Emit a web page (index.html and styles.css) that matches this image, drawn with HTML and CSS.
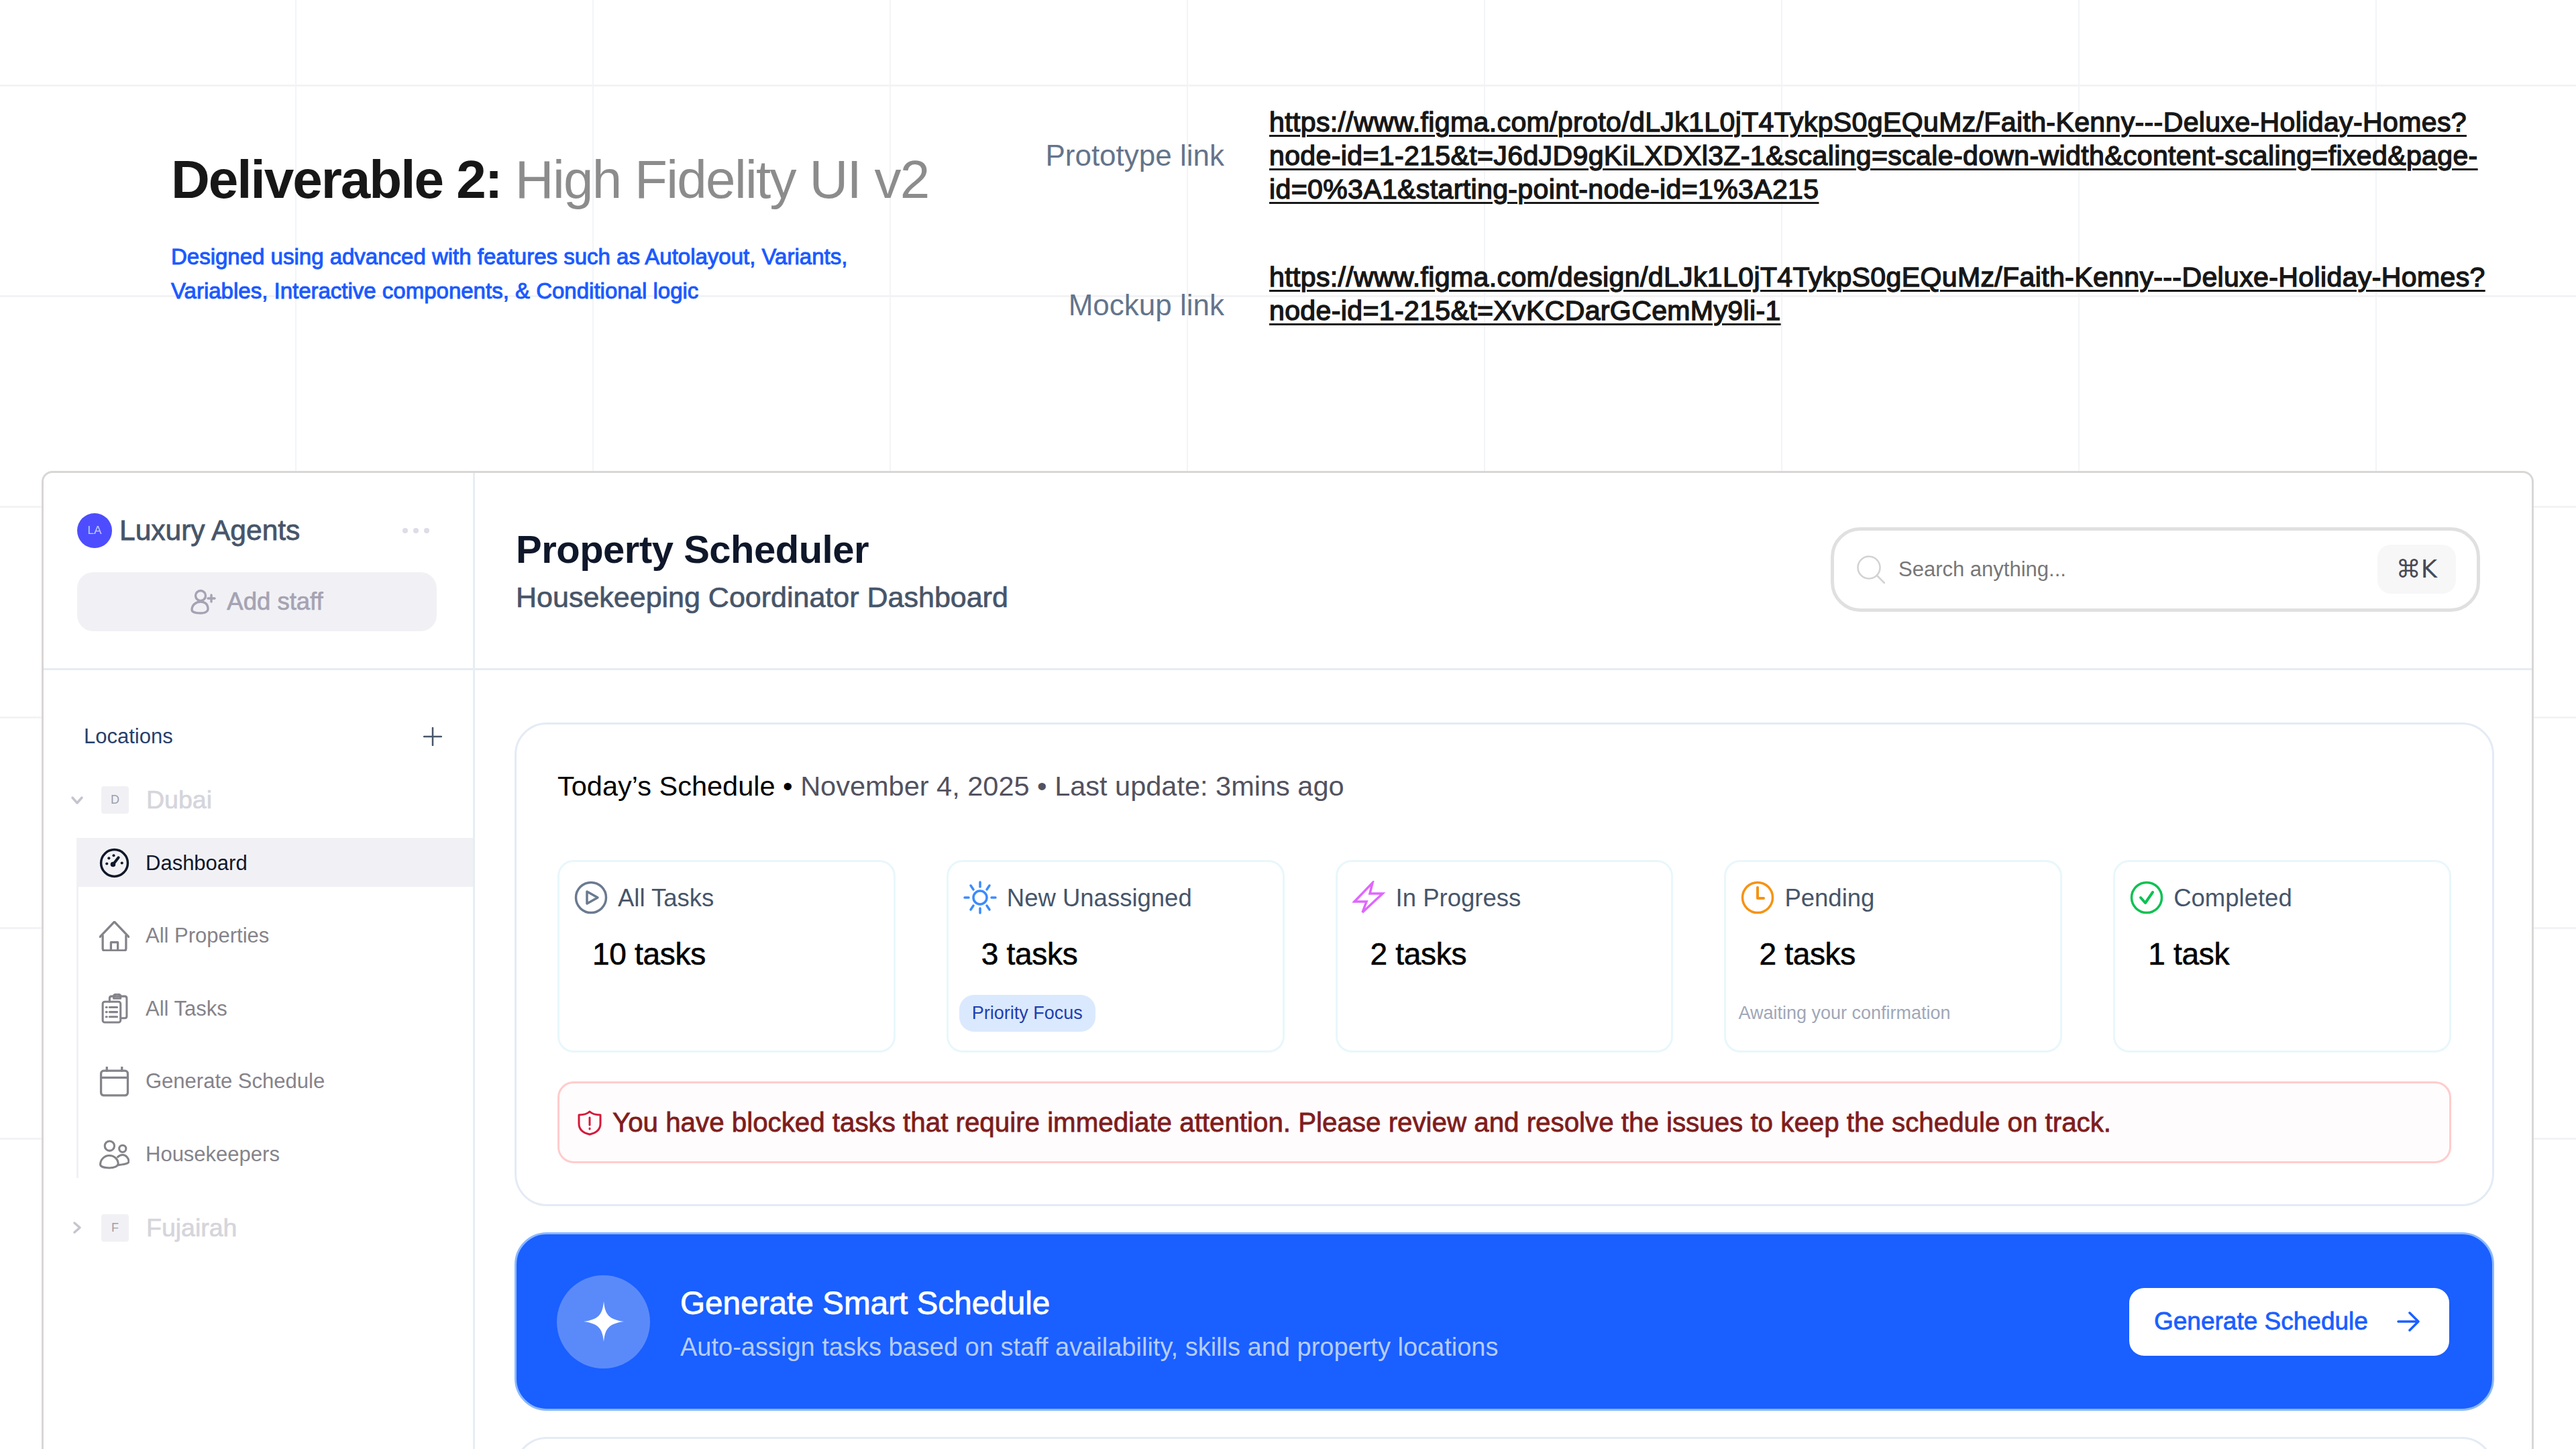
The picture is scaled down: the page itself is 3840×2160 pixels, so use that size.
FILE: index.html
```html
<!DOCTYPE html>
<html lang="en">
<head>
  <meta charset="UTF-8" />
  <title>Deliverable 2: High Fidelity UI v2</title>
  <link rel="stylesheet" href="styles.css">
</head>
<body>
  <header class="hero">
    <div class="hero-intro">
      <h1 class="hero-title"><b>Deliverable 2:</b> High Fidelity UI v2</h1>
      <p class="hero-note">Designed using advanced with features such as Autolayout, Variants,<br>Variables, Interactive components, &amp; Conditional logic</p>
    </div>
    <div class="hero-links">
      <span class="link-label">Prototype link</span>
      <a class="link-url" href="#">https://www.figma.com/proto/dLJk1L0jT4TykpS0gEQuMz/Faith-Kenny---Deluxe-Holiday-Homes?<br>node-id=1-215&amp;t=J6dJD9gKiLXDXl3Z-1&amp;scaling=scale-down-width&amp;content-scaling=fixed&amp;page-<br>id=0%3A1&amp;starting-point-node-id=1%3A215</a>
      <span class="link-label link-label-low">Mockup link</span>
      <a class="link-url" href="#">https://www.figma.com/design/dLJk1L0jT4TykpS0gEQuMz/Faith-Kenny---Deluxe-Holiday-Homes?<br>node-id=1-215&amp;t=XvKCDarGCemMy9li-1</a>
    </div>
  </header>

  <div class="app">
    <aside class="sidebar">
      <div class="side-top">
        <div class="org">
          <span class="org-avatar">LA</span>
          <span class="org-name">Luxury Agents</span>
          <span class="org-more"><i></i><i></i><i></i></span>
        </div>
        <button class="add-staff">
          <svg class="add-icon" viewBox="0 0 38 38" fill="none" stroke="currentColor" stroke-width="3.4" stroke-linecap="round" stroke-linejoin="round"><circle cx="15" cy="10" r="7.5"/><path d="M2 31c0-7 6-12 13-12 2.500 0 5 .7 7 2 3 2 4 5 4 9 0 2-2 6-11 6S2 34 2 31z"/><path d="M26 14h10M31 9v10"/></svg>
          Add staff
        </button>
      </div>
      <div class="side-body">
        <div class="loc-head">
          <span>Locations</span>
          <svg class="loc-plus" viewBox="0 0 28 28" fill="none" stroke="currentColor" stroke-width="2.500" stroke-linecap="round"><path d="M14 1v26M1 14h26"/></svg>
        </div>
        <div class="loc">
          <svg class="loc-chevron" viewBox="0 0 20 20" fill="none" stroke="currentColor" stroke-width="3.500" stroke-linecap="round" stroke-linejoin="round"><path d="M3 6l7 8 7-8"/></svg>
          <span class="loc-badge">D</span>
          <span class="loc-name">Dubai</span>
        </div>
        <nav class="nav">
          <a class="nav-item active">
            <svg class="nav-icon" viewBox="0 0 44 44" fill="none" stroke="currentColor" stroke-width="3.400" stroke-linecap="round"><circle cx="22" cy="22" r="19.500"/><path d="M21 23l7-9" stroke-width="4"/><circle cx="20" cy="24" r="2" fill="currentColor"/><g fill="currentColor" stroke="none"><circle cx="11" cy="23" r="2"/><circle cx="14" cy="15" r="2"/><circle cx="21" cy="11" r="2"/><circle cx="33" cy="22" r="2"/></g></svg>
            Dashboard
          </a>
          <a class="nav-item">
            <svg class="nav-icon" viewBox="0 0 44 44" fill="none" stroke="currentColor" stroke-width="3.200" stroke-linecap="round" stroke-linejoin="round"><path d="M1 23L22 1l21 22"/><path d="M5 21v19c0 2 1 3 3 3h28c2 0 3-1 3-3V21"/><path d="M17 43V31h10v12"/></svg>
            All Properties
          </a>
          <a class="nav-item">
            <svg class="nav-icon" viewBox="0 0 44 44" fill="none" stroke="currentColor" stroke-width="3" stroke-linecap="round" stroke-linejoin="round"><rect x="5" y="12" width="26" height="30" rx="3"/><path d="M15 12V7c0-2 1-3 3-3h19c2 0 3 1 3 3v26c0 2-1 3-3 3h-6"/><path d="M21 4c0-2 2-3 5-3s5 1 5 3v3H21z"/><path d="M15 20h11M15 27h11M15 34h11"/><path d="M10 20h1M10 27h1M10 34h1"/></svg>
            All Tasks
          </a>
          <a class="nav-item">
            <svg class="nav-icon" viewBox="0 0 44 44" fill="none" stroke="currentColor" stroke-width="3.200" stroke-linecap="round" stroke-linejoin="round"><rect x="2.500" y="6" width="39" height="36" rx="4"/><path d="M3 16h38M11 1v5M33 1v5"/></svg>
            Generate Schedule
          </a>
          <a class="nav-item">
            <svg class="nav-icon" viewBox="0 0 44 42" fill="none" stroke="currentColor" stroke-width="3" stroke-linecap="round" stroke-linejoin="round"><circle cx="15" cy="9" r="7"/><circle cx="34" cy="13" r="5"/><path d="M1.500 36c0-7 6-13 13-13s13 5 13 12c0 3-5 6-13 6S1.500 39 1.500 36z"/><path d="M27 25c2-2 4-3 7-3 5 0 9 5 9 10 0 3-8 4-16 5"/></svg>
            Housekeepers
          </a>
        </nav>
        <div class="loc loc-last">
          <svg class="loc-chevron" viewBox="0 0 20 20" fill="none" stroke="currentColor" stroke-width="3.500" stroke-linecap="round" stroke-linejoin="round"><path d="M6 3l8 7-8 7"/></svg>
          <span class="loc-badge">F</span>
          <span class="loc-name">Fujairah</span>
        </div>
      </div>
    </aside>

    <main class="main">
      <div class="topbar">
        <div class="page-head">
          <h2 class="page-title">Property Scheduler</h2>
          <p class="page-sub">Housekeeping Coordinator Dashboard</p>
        </div>
        <div class="search">
          <svg class="search-icon" viewBox="0 0 42 42" fill="none" stroke="currentColor" stroke-width="2.500" stroke-linecap="round"><circle cx="18" cy="18" r="16.500"/><path d="M30 30l11 11"/></svg>
          <span class="search-text">Search anything...</span>
          <kbd class="search-key">⌘K</kbd>
        </div>
      </div>

      <div class="content">
        <section class="card">
          <h3 class="today"><b>Today’s Schedule •</b> November 4, 2025 • Last update: 3mins ago</h3>
          <div class="stats">
            <div class="stat">
              <div class="stat-head">
                <svg class="stat-icon icon-slate" viewBox="0 0 50 50" fill="none" stroke="currentColor" stroke-width="3.500" stroke-linejoin="round"><circle cx="25" cy="25" r="22.500"/><path d="M19 16l16 9-16 9z"/></svg>
                All Tasks
              </div>
              <div class="stat-count">10 tasks</div>
            </div>
            <div class="stat">
              <div class="stat-head">
                <svg class="stat-icon icon-blue" viewBox="0 0 50 50" fill="none" stroke="currentColor" stroke-width="3.500" stroke-linecap="round"><circle cx="25" cy="25" r="10"/><path d="M25 2v7M25 41v7M2 25h6M42 25h6M11 7l4 6M39 7l-4 6M11 43l4-6M39 43l-4-6"/></svg>
                New Unassigned
              </div>
              <div class="stat-count">3 tasks</div>
              <span class="stat-tag">Priority Focus</span>
            </div>
            <div class="stat">
              <div class="stat-head">
                <svg class="stat-icon icon-pink" viewBox="0 0 50 50" fill="none" stroke="currentColor" stroke-width="3.500" stroke-linejoin="miter"><path d="M30 3L3 31h18l-6 16 30-28H26z"/></svg>
                In Progress
              </div>
              <div class="stat-count">2 tasks</div>
            </div>
            <div class="stat">
              <div class="stat-head">
                <svg class="stat-icon icon-orange" viewBox="0 0 50 50" fill="none" stroke="currentColor" stroke-width="3.500" stroke-linecap="round" stroke-linejoin="round"><circle cx="25" cy="25" r="22.500"/><path d="M25 10v16h9" stroke-width="4"/></svg>
                Pending
              </div>
              <div class="stat-count">2 tasks</div>
              <p class="stat-note">Awaiting your confirmation</p>
            </div>
            <div class="stat">
              <div class="stat-head">
                <svg class="stat-icon icon-green" viewBox="0 0 50 50" fill="none" stroke="currentColor" stroke-width="3.500" stroke-linecap="round" stroke-linejoin="round"><circle cx="25" cy="25" r="22.500"/><path d="M16 25l7 8 11-16" stroke-width="4"/></svg>
                Completed
              </div>
              <div class="stat-count">1 task</div>
            </div>
          </div>
          <div class="alert">
            <svg class="alert-icon" viewBox="0 0 38 38" fill="none" stroke="currentColor" stroke-width="3" stroke-linecap="round" stroke-linejoin="round"><path d="M19 2c4 4 9 5 16 5v13c0 9-7 14-16 16C10 34 3 29 3 20V7c7 0 12-1 16-5z"/><path d="M19 11v11M19 27v1"/></svg>
            You have blocked tasks that require immediate attention. Please review and resolve the issues to keep the schedule on track.
          </div>
        </section>

        <section class="promo">
          <span class="promo-badge">
            <svg class="promo-star" viewBox="0 0 60 60" fill="#fff"><path d="M30 0c2 20 8 27 30 30-22 3-28 10-30 30-2-20-8-27-30-30 22-3 28-10 30-30z"/></svg>
          </span>
          <div class="promo-text">
            <h3 class="promo-title">Generate Smart Schedule</h3>
            <p class="promo-sub">Auto-assign tasks based on staff availability, skills and property locations</p>
          </div>
          <button class="promo-btn">
            Generate Schedule
            <svg class="promo-arrow" viewBox="0 0 34 30" fill="none" stroke="currentColor" stroke-width="3.500" stroke-linecap="round" stroke-linejoin="round"><path d="M2 15h30M19 2l13 13-13 13"/></svg>
          </button>
        </section>

        <section class="card card-next"></section>
      </div>
    </main>
  </div>
</body>
</html>
```

FILE: styles.css
```css
* {
  box-sizing: border-box;
}
html, body {
  margin: 0;
  height: 2160px;
  overflow: hidden;
}
body {
  font-family: "Liberation Sans", Arial, sans-serif;
  color: #171717;
  background-color: #fff;
  /* grid stops above the last row, the white layer hides it */
  background-image:
    linear-gradient(#fff, #fff),
    linear-gradient(#f3f3f6 3px, transparent 3px),
    linear-gradient(90deg, #f3f4f7 2px, transparent 2px);
  background-size: 100% 300px, 443px 314px, 443px 314px;
  background-position: 0 1860px, 440px 126px, 440px 126px;
  background-repeat: no-repeat, repeat, repeat;
}
h1, h2, h3, p {
  margin: 0;
  font-weight: normal;
}

/* top block */
.hero {
  height: 702px;
  display: flex;
}
.hero-intro {
  flex: none;
  width: 1555px;
  padding: 218px 0 0 255px;
}
.hero-title {
  font-size: 80px;
  line-height: 100px;
  letter-spacing: -1.7px;
  white-space: nowrap;
  color: #8c8c8c;
}
.hero-title b {
  color: #171717;
  letter-spacing: -2px;
}
.hero-note {
  margin-top: 39px;
  font-size: 33px;
  line-height: 51px;
  color: #1a5aff;
  -webkit-text-stroke: 1px currentColor;
}
.hero-links {
  padding-top: 157px;
  display: grid;
  grid-template-columns: 270px auto;
  column-gap: 67px;
  row-gap: 81px;
  align-content: start;
}
.link-label {
  align-self: center;
  text-align: right;
  font-size: 44px;
  color: #64748b;
}
.link-label-low {
  margin-top: 34px;
}
.link-url {
  font-size: 41px;
  line-height: 50px;
  letter-spacing: 0.38px;
  white-space: nowrap;
  color: #171717;
  text-decoration: underline;
  text-decoration-thickness: 3px;
  text-underline-offset: 5px;
  -webkit-text-stroke: 1.4px currentColor;
}

/* app frame */
.app {
  width: 3715px;
  height: 1458px;
  margin-left: 62px;
  background: #fff;
  border: 3px solid #d9d6d6;
  border-bottom: none;
  border-radius: 16px 16px 0 0;
  display: flex;
  overflow: hidden;
}
.sidebar {
  flex: none;
  width: 643px;
  border-right: 3px solid #e6edf3;
}
.side-top {
  height: 294px;
  padding: 60px 50px 0;
  border-bottom: 3px solid #e6ebf3;
}
.org {
  height: 52px;
  display: flex;
  align-items: center;
  width: 536px;
}
.org-avatar {
  flex: none;
  width: 52px;
  height: 52px;
  border-radius: 50%;
  background: #4d4dff;
  color: #c9c9ff;
  font-size: 17px;
  display: flex;
  align-items: center;
  justify-content: center;
}
.org-name {
  margin-left: 11px;
  font-size: 42.5px;
  color: #475569;
  -webkit-text-stroke: 0.8px currentColor;
}
.org-more {
  margin-left: auto;
  margin-right: 11px;
  display: flex;
  gap: 8px;
}
.org-more i {
  width: 8px;
  height: 8px;
  border-radius: 50%;
  background: #dedce8;
}
.add-staff {
  width: 536px;
  height: 88px;
  margin-top: 36px;
  border: none;
  border-radius: 24px;
  background: #f1f1f5;
  color: #a5a3b3;
  font-family: inherit;
  font-size: 36.5px;
  display: flex;
  align-items: center;
  justify-content: center;
  gap: 16px;
  -webkit-text-stroke: 0.7px currentColor;
}
.add-icon {
  width: 38px;
  height: 38px;
}
.side-body {
  padding-top: 73px;
}
.loc-head {
  height: 52px;
  padding: 0 46px 0 60px;
  display: flex;
  align-items: center;
  justify-content: space-between;
  font-size: 31px;
  color: #27406b;
}
.loc-plus {
  width: 28px;
  height: 28px;
  color: #475569;
}
.loc {
  margin-top: 48px;
  height: 41px;
  padding-left: 40px;
  display: flex;
  align-items: center;
}
.loc-last {
  margin-top: 54px;
}
.loc-chevron {
  width: 20px;
  height: 20px;
  color: #c5c5cf;
}
.loc-badge {
  width: 41px;
  height: 41px;
  margin-left: 26px;
  border-radius: 4px;
  background: #f1f1f5;
  color: #9d9da8;
  font-size: 18px;
  display: flex;
  align-items: center;
  justify-content: center;
}
.loc-name {
  margin-left: 26px;
  font-size: 37.5px;
  color: #d5d5dc;
  -webkit-text-stroke: 0.7px currentColor;
}
.nav {
  margin: 36px 0 0 49px;
  border-left: 3px solid #f1f1f5;
  display: flex;
  flex-direction: column;
  gap: 36px;
}
.nav-item {
  height: 72.5px;
  padding: 3px 0 0 31px;
  display: flex;
  align-items: center;
  gap: 24px;
  font-size: 31px;
  color: #85838a;
}
.nav-item.active {
  background: #f1f1f5;
  color: #0f172a;
}
.nav-icon {
  flex: none;
  width: 45px;
  height: 45px;
}

/* main column */
.main {
  flex: 1;
  min-width: 0;
}
.topbar {
  height: 294px;
  padding: 0 77px 0 61px;
  border-bottom: 3px solid #e6ebf3;
  display: flex;
  align-items: center;
  justify-content: space-between;
}
.page-title {
  font-size: 58px;
  line-height: 70px;
  font-weight: bold;
  letter-spacing: -0.5px;
  color: #0f172a;
}
.page-sub {
  margin-top: 9px;
  font-size: 43px;
  line-height: 54px;
  color: #475569;
  -webkit-text-stroke: 0.7px currentColor;
}
.search {
  width: 968px;
  height: 126px;
  margin-bottom: 4px;
  padding: 0 31px 0 34px;
  border: 5px solid #e0e0e0;
  border-radius: 44px;
  display: flex;
  align-items: center;
}
.search-icon {
  width: 42px;
  height: 42px;
  color: #d2d2d2;
}
.search-text {
  margin-left: 20px;
  font-size: 31px;
  color: #777;
}
.search-key {
  margin-left: auto;
  width: 117px;
  height: 73px;
  border-radius: 20px;
  background: #f7f7f8;
  color: #4a4a55;
  font-family: "DejaVu Sans", "Liberation Sans", sans-serif;
  font-size: 37px;
  display: flex;
  align-items: center;
  justify-content: center;
}
.content {
  padding: 78px 56px 0 59px;
  display: flex;
  flex-direction: column;
  gap: 39px;
}
.card {
  flex: none;
  height: 721px;
  padding: 62px 61px 0;
  border: 3px solid #e4ebf5;
  border-radius: 48px;
}
.card-next {
  height: 200px;
}
.today {
  font-size: 41.5px;
  line-height: 60px;
  color: #52525f;
}
.today b {
  font-weight: normal;
  color: #000;
}
.stats {
  margin-top: 80px;
  display: grid;
  grid-template-columns: repeat(5, 1fr);
  gap: 76px;
}
.stat {
  height: 287px;
  padding: 28px 22px 0;
  border: 3px solid #e8f7fb;
  border-radius: 24px;
}
.stat-head {
  height: 50px;
  padding-top: 2px;
  display: flex;
  align-items: center;
  gap: 15px;
  font-size: 36.5px;
  color: #475569;
}
.stat-icon {
  flex: none;
  width: 50px;
  height: 50px;
  margin-top: -2px;
}
.icon-slate { color: #6b7a90; }
.icon-blue { color: #3b8bff; }
.icon-pink { color: #e066ff; }
.icon-orange { color: #f59314; }
.icon-green { color: #0cc252; }
.stat-count {
  margin: 32px 0 0 27px;
  font-size: 46px;
  line-height: 54px;
  letter-spacing: -0.3px;
  color: #000;
  -webkit-text-stroke: 0.6px currentColor;
}
.stat-tag {
  display: inline-block;
  margin: 34px 0 0 -6px;
  height: 55px;
  padding: 0 19px;
  border-radius: 22px;
  background: #dbe9fe;
  color: #1e40af;
  font-size: 27px;
  line-height: 55px;
}
.stat-note {
  margin: 43px 0 0 -4px;
  font-size: 27px;
  line-height: 36px;
  color: #a0a7b8;
}
.alert {
  margin-top: 43px;
  height: 122px;
  padding: 2px 0 0 26px;
  border: 3px solid #ffcccc;
  border-radius: 24px;
  background: #fffcfd;
  color: #7f1d1d;
  font-size: 40.3px;
  display: flex;
  align-items: center;
  gap: 15px;
  -webkit-text-stroke: 0.8px currentColor;
}
.alert-icon {
  flex: none;
  width: 38px;
  height: 38px;
  color: #d6183a;
}
.promo {
  flex: none;
  height: 266px;
  padding: 0 64px 0 60px;
  border: 3px solid #8ab8ff;
  border-radius: 48px;
  background: #1a5fff;
  display: flex;
  align-items: center;
}
.promo-badge {
  flex: none;
  width: 139px;
  height: 139px;
  border-radius: 50%;
  background: #5a8afa;
  display: flex;
  align-items: center;
  justify-content: center;
}
.promo-star {
  width: 60px;
  height: 60px;
}
.promo-text {
  margin: 3px 0 0 45px;
}
.promo-title {
  font-size: 47.7px;
  line-height: 60px;
  color: #fff;
  -webkit-text-stroke: 0.8px currentColor;
}
.promo-sub {
  margin-top: 12px;
  font-size: 38px;
  line-height: 46px;
  color: #b6cdf9;
}
.promo-btn {
  margin-left: auto;
  width: 477px;
  height: 101px;
  padding: 0 44px 0 37px;
  border: none;
  border-radius: 22px;
  background: #fff;
  color: #1a5fff;
  font-family: inherit;
  font-size: 37px;
  display: flex;
  align-items: center;
  justify-content: space-between;
  -webkit-text-stroke: 0.8px currentColor;
}
.promo-arrow {
  width: 34px;
  height: 30px;
}
```
